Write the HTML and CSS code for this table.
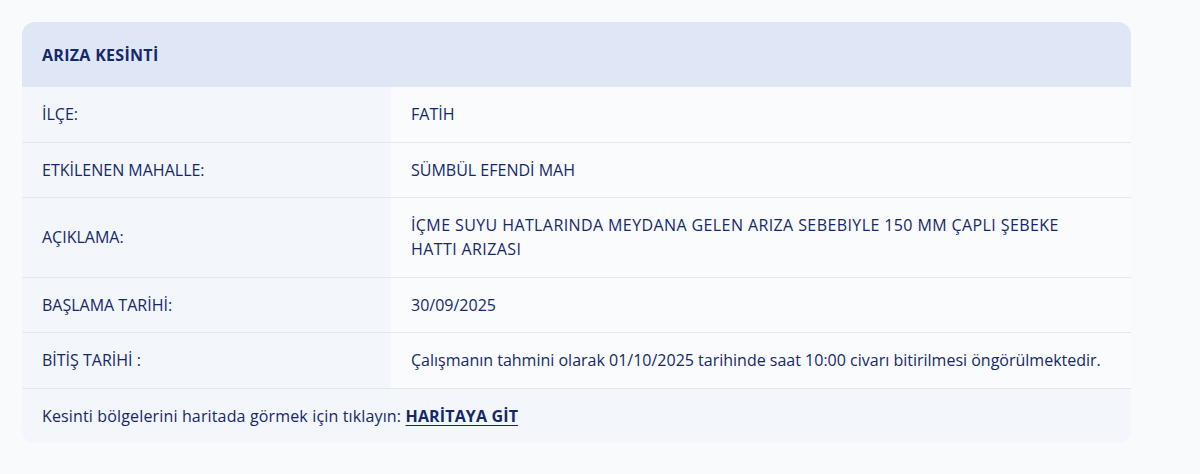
FILE: index.html
```html
<!DOCTYPE html>
<html lang="tr">
<head>
<meta charset="utf-8">
<title>Arıza Kesinti</title>
<link rel="stylesheet" href="styles.css">
</head>
<body>
<div class="page">
  <section class="card">
    <div class="card-head">ARIZA KESİNTİ</div>
    <div class="row">
      <div class="label">İLÇE:</div>
      <div class="value">FATİH</div>
    </div>
    <div class="row">
      <div class="label">ETKİLENEN MAHALLE:</div>
      <div class="value">SÜMBÜL EFENDİ MAH</div>
    </div>
    <div class="row">
      <div class="label">AÇIKLAMA:</div>
      <div class="value caps">İÇME SUYU HATLARINDA MEYDANA GELEN ARIZA SEBEBIYLE 150 MM ÇAPLI ŞEBEKE<br>HATTI ARIZASI</div>
    </div>
    <div class="row">
      <div class="label">BAŞLAMA TARİHİ:</div>
      <div class="value">30/09/2025</div>
    </div>
    <div class="row">
      <div class="label">BİTİŞ TARİHİ :</div>
      <div class="value">Çalışmanın tahmini olarak 01/10/2025 tarihinde saat 10:00 civarı bitirilmesi öngörülmektedir.</div>
    </div>
    <div class="card-foot">Kesinti bölgelerini haritada görmek için tıklayın: <a class="map-link" href="#">HARİTAYA GİT</a></div>
  </section>
</div>
</body>
</html>
```

FILE: styles.css
```css
* { box-sizing: border-box; }
html, body { margin: 0; padding: 0; }
body {
  background: #f9fafc;
  font-family: "Open Sans", "Noto Sans", sans-serif;
  color: #15296a;
  font-size: 16px;
}
.page {
  padding: 22px 69px 32px 22px;
}
.card {
  border-radius: 13px;
  overflow: hidden;
  background: #fafbfd;
}
.card-head {
  background: #dfe7f7;
  height: 65px;
  padding: 0 20px;
  display: flex;
  align-items: center;
  font-weight: 700;
  font-size: 16px;
  letter-spacing: 0.3px;
  color: #14286a;
}
.row {
  display: grid;
  grid-template-columns: 369px 1fr;
  border-bottom: 1px solid #e4e7ed;
}
.label, .value {
  padding: 15.25px 19px 15.25px 20px;
  line-height: 24px;
  display: flex;
  align-items: center;
}
.label {
  background: #f3f6fb;
}
.value {
  background: #fafbfd;
}
.caps {
  letter-spacing: 0.4px;
}
.card-foot {
  background: #f3f6fb;
  height: 54px;
  padding: 0 20px;
  display: flex;
  align-items: center;
  white-space: pre;
  letter-spacing: 0.15px;
}
.map-link {
  color: #14286a;
  font-weight: 700;
  text-decoration: underline;
  text-underline-offset: 3px;
}
```
